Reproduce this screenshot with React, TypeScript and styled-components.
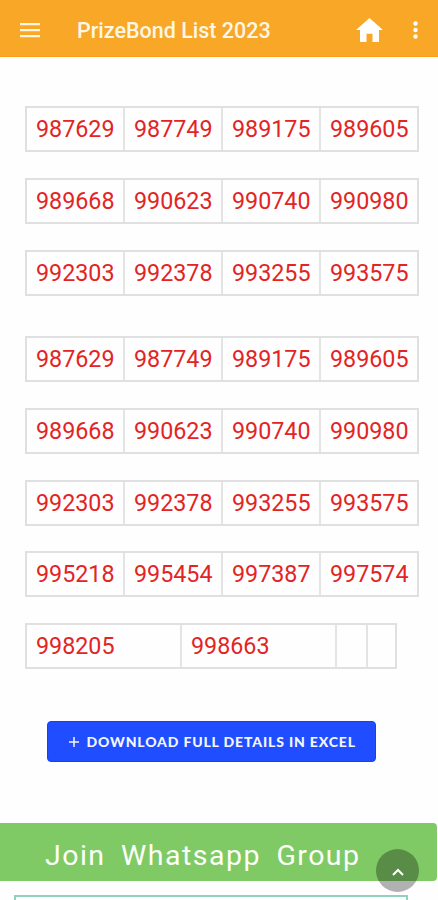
import React from "react";
import styled, { createGlobalStyle } from "styled-components";

const GlobalStyle = createGlobalStyle`
  * { box-sizing: border-box; }
  html, body { margin: 0; padding: 0; background: #fefefe; overflow: hidden; }
`;

const Screen = styled.div`
  position: relative;
  display: flex;
  flex-direction: column;
  width: 438px;
  height: 900px;
  overflow: hidden;
  background: #fefefe;
  font-family: Roboto, sans-serif;
`;

const AppBar = styled.header`
  display: flex;
  align-items: center;
  flex: none;
  height: 57px;
  padding: 4px 20px 0 20px;
  background: #f8a727;
  border-bottom: 1px solid #fa9d12;
  color: #fff6e4;
`;

const Title = styled.h1`
  flex: 1;
  margin: 2px 0 0 37px;
  font-size: 21.5px;
  line-height: 28px;
  font-weight: 500;
  white-space: nowrap;
`;

const IconButton = styled.button<{ $gap?: number }>`
  display: flex;
  padding: 0;
  margin-right: ${(p) => p.$gap ?? 0}px;
  border: 0;
  background: none;
  color: inherit;
`;

const Results = styled.main`
  display: flex;
  flex-direction: column;
  gap: 40.5px;
  flex: none;
  padding: 49px 0 0 25px;
`;

const Group = styled.section`
  display: flex;
  flex-direction: column;
  gap: 25.8px;
`;

const NumberRow = styled.div<{ $columns: string }>`
  display: grid;
  grid-template-columns: ${(p) => p.$columns};
  width: max-content;
  height: 46px;
  border: 2px solid #e0e0e0;
`;

const Cell = styled.div`
  padding: 0 0 0 9px;
  font-size: 23.3px;
  line-height: 42px;
  color: #e32424;

  & + & {
    border-left: 2px solid #e4e4e4;
    padding-left: 9px;
  }
`;

const DownloadButton = styled.button`
  display: flex;
  align-items: center;
  flex: none;
  width: 329px;
  height: 41px;
  margin: 52px 0 0 46.5px;
  padding: 0 0 0 21px;
  border: 1px solid #1a3ff0;
  border-radius: 4px;
  background: #204dff;
  color: #f4f6ff;
  font-family: Lato, sans-serif;
  font-size: 14px;
  font-weight: 900;
  letter-spacing: 0.85px;
  white-space: nowrap;
`;

const PlusIcon = styled.svg`
  margin-right: 8px;
`;

const JoinBanner = styled.a`
  display: block;
  flex: none;
  width: 437px;
  height: 58px;
  margin-top: 61px;
  padding-left: 45px;
  border-radius: 0 4px 4px 0;
  background: #80ca66;
  color: #fcfff8;
  font-size: 28.5px;
  line-height: 65px;
  letter-spacing: 1.47px;
  word-spacing: 7px;
  white-space: nowrap;
`;

const NextPanel = styled.div`
  flex: none;
  width: 394px;
  height: 30px;
  margin: 14px 0 0 14px;
  border: 2px solid #94d1bc;
  border-bottom: 0;
`;

const ScrollTop = styled.button`
  position: absolute;
  right: 19px;
  bottom: 8px;
  display: flex;
  align-items: center;
  justify-content: center;
  width: 43px;
  height: 43px;
  padding: 3px 0 0;
  border: 0;
  border-radius: 50%;
  background: rgba(0, 0, 0, 0.3);
  color: #fff;
`;

const EVEN = "96px 98px 98px 98px";
const LAST = "153px 155px 31px 29px";

const groups: string[][][] = [
  [
    ["987629", "987749", "989175", "989605"],
    ["989668", "990623", "990740", "990980"],
    ["992303", "992378", "993255", "993575"],
  ],
  [
    ["987629", "987749", "989175", "989605"],
    ["989668", "990623", "990740", "990980"],
    ["992303", "992378", "993255", "993575"],
    ["995218", "995454", "997387", "997574"],
    ["998205", "998663", "", ""],
  ],
];

export default function App() {
  return (
    <>
      <GlobalStyle />
      <Screen>
        <AppBar>
          <IconButton aria-label="Menu">
            <svg width="20" height="16" viewBox="0 0 20 16" fill="currentColor">
              <path d="M0 1h20v2.2H0zM0 7h20v2.2H0zM0 13h20v2.2H0z" />
            </svg>
          </IconButton>
          <Title>PrizeBond List 2023</Title>
          <IconButton aria-label="Home" $gap={30}>
            <svg width="27" height="24" viewBox="0 0 27 24" fill="#fff">
              <path d="M13.5 0 27 12h-4v11.2a.8.8 0 0 1-.8.8h-5.7v-8.2h-6V24H4.8a.8.8 0 0 1-.8-.8V12H0z" />
            </svg>
          </IconButton>
          <IconButton aria-label="More">
            <svg width="5" height="18" viewBox="0 0 5 18" fill="#fff">
              <circle cx="2.5" cy="2.5" r="2.2" />
              <circle cx="2.5" cy="9" r="2.2" />
              <circle cx="2.5" cy="15.5" r="2.2" />
            </svg>
          </IconButton>
        </AppBar>

        <Results>
          {groups.map((rows, g) => (
            <Group key={g}>
              {rows.map((row, r) => (
                <NumberRow key={r} $columns={row[3] ? EVEN : LAST}>
                  {row.map((value, c) => (
                    <Cell key={c}>{value}</Cell>
                  ))}
                </NumberRow>
              ))}
            </Group>
          ))}
        </Results>

        <DownloadButton>
          <PlusIcon width="10" height="10" viewBox="0 0 10 10" stroke="currentColor" strokeWidth="1.5">
            <path d="M5 0v10M0 5h10" />
          </PlusIcon>
          DOWNLOAD FULL DETAILS IN EXCEL
        </DownloadButton>

        <JoinBanner>Join Whatsapp Group</JoinBanner>
        <NextPanel />

        <ScrollTop aria-label="Scroll to top">
          <svg width="12" height="8" viewBox="0 0 12 8" fill="none" stroke="currentColor" strokeWidth="2">
            <path d="M1 7 6 2l5 5" />
          </svg>
        </ScrollTop>
      </Screen>
    </>
  );
}
